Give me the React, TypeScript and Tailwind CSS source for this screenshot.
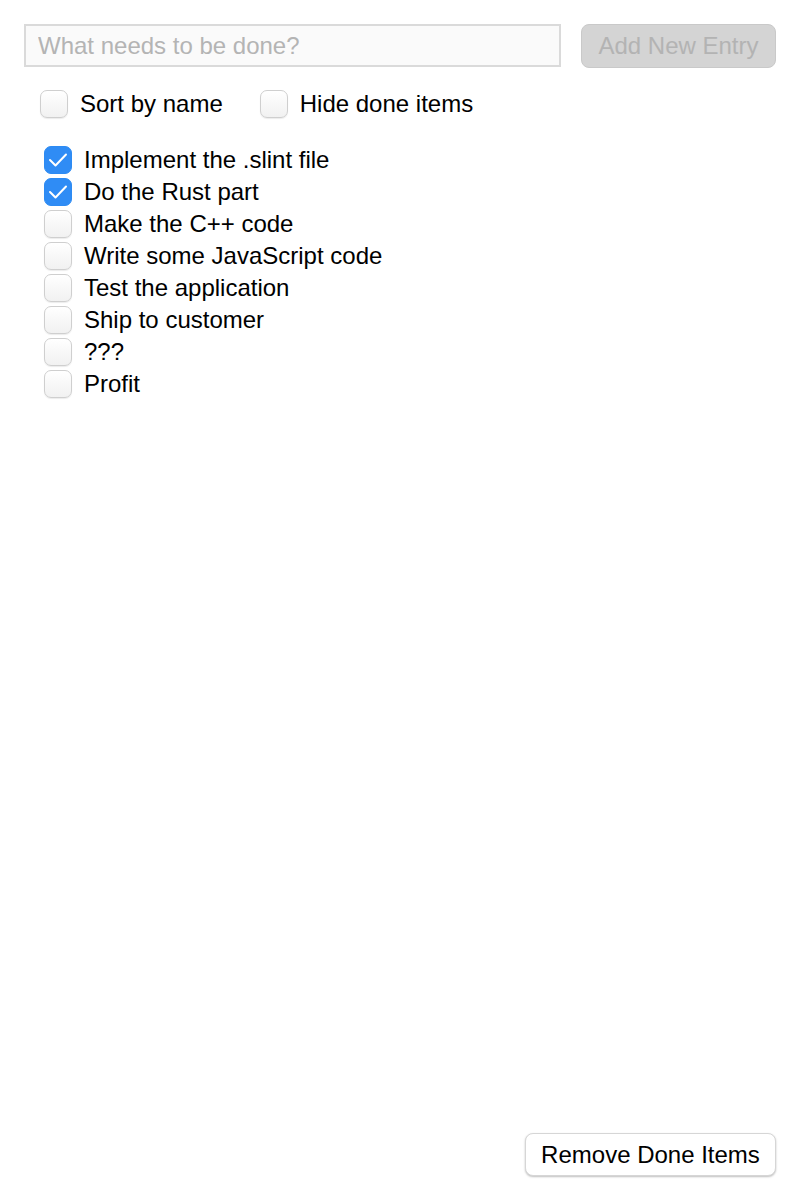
import { useState } from "react";

type Todo = {
    title: string;
    checked: boolean;
};

const INITIAL_TODOS: Todo[] = [
    { title: "Implement the .slint file", checked: true },
    { title: "Do the Rust part", checked: true },
    { title: "Make the C++ code", checked: false },
    { title: "Write some JavaScript code", checked: false },
    { title: "Test the application", checked: false },
    { title: "Ship to customer", checked: false },
    { title: "???", checked: false },
    { title: "Profit", checked: false },
];

function CheckBox ({ checked, onToggle }: { checked: boolean; onToggle: () => void })
{
    return (
        <button
            type="button"
            onClick={onToggle}
            className={
                checked
                    ? "relative flex h-7 w-7 shrink-0 items-center justify-center rounded-[7px] border border-[#2d8bf3] bg-[#2f8cf5]"
                    : "relative flex h-7 w-7 shrink-0 items-center justify-center rounded-[7px] border border-[#cfcfcf] bg-gradient-to-b from-white to-[#f1f1f1] shadow-[0_1px_1px_rgba(0,0,0,0.08)]"
            }
        >
            {checked && (
                <svg width="26" height="26" viewBox="0 0 26 26" fill="none" className="shrink-0">
                    <polyline
                        points="5,13 10.5,18.5 21,7.5"
                        stroke="white"
                        strokeWidth="2"
                        strokeLinecap="round"
                        strokeLinejoin="round"
                    />
                </svg>
            )}
        </button>
    );
}

export default function App ()
{
    const [todos, setTodos] = useState<Todo[]>(INITIAL_TODOS);
    const [sortByName, setSortByName] = useState(false);
    const [hideDone, setHideDone] = useState(false);

    const toggle = (i: number) =>
    {
        setTodos((prev) => prev.map((t, idx) => (idx === i ? { ...t, checked: !t.checked } : t)));
    };

    let shown = todos.map((t, i) => ({ ...t, index: i }));
    if (hideDone) {
        shown = shown.filter((t) => !t.checked);
    }
    if (sortByName) {
        shown = [...shown].sort((a, b) => a.title.localeCompare(b.title));
    }

    return (
        <div className="flex h-[1200px] flex-col bg-white p-6 font-['Liberation_Sans',Arial,sans-serif] text-2xl text-black">
            <div className="flex gap-5">
                <input
                    type="text"
                    placeholder="What needs to be done?"
                    className="h-[43px] min-w-0 flex-1 border-2 border-[#dadada] bg-[#fafafa] px-3 text-2xl outline-none placeholder:text-[#b4b4b4]"
                />
                <button
                    type="button"
                    disabled
                    className="h-11 w-[195px] rounded-lg border border-[#c9c9c9] bg-[#d4d4d4] text-2xl text-[#b3b3b3]"
                >
                    Add New Entry
                </button>
            </div>

            <div className="mt-5 flex gap-[37px] pl-4">
                <div className="flex items-center gap-3">
                    <CheckBox checked={sortByName} onToggle={() => setSortByName(!sortByName)} />
                    <span className="leading-8">Sort by name</span>
                </div>
                <div className="flex items-center gap-3">
                    <CheckBox checked={hideDone} onToggle={() => setHideDone(!hideDone)} />
                    <span className="leading-8">Hide done items</span>
                </div>
            </div>

            <div className="mt-6 flex flex-col pl-5">
                {shown.map((t) => (
                    <div key={t.index} className="flex h-8 items-center gap-3">
                        <CheckBox checked={t.checked} onToggle={() => toggle(t.index)} />
                        <span className="leading-8">{t.title}</span>
                    </div>
                ))}
            </div>

            <div className="flex-1" />

            <div className="flex justify-end">
                <button
                    type="button"
                    onClick={() => setTodos((prev) => prev.filter((t) => !t.checked))}
                    className="h-[43px] w-[251px] rounded-lg border border-[#d6d6d6] bg-white text-2xl shadow-[0_1px_2px_rgba(0,0,0,0.25)]"
                >
                    Remove Done Items
                </button>
            </div>
        </div>
    );
}
